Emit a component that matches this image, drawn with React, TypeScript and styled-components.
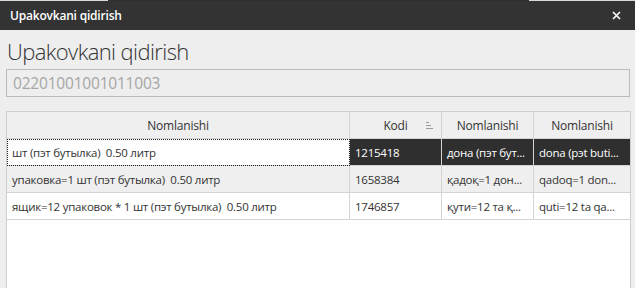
import React from "react";
import styled, { createGlobalStyle } from "styled-components";

const Global = createGlobalStyle`
  html, body { margin: 0; padding: 0; background: #eeeeee; }
  body { font-family: "Open Sans", "Noto Sans", sans-serif; overflow: hidden; }
  * { box-sizing: border-box; }
`;

const Page = styled.div`
  width: 635px;
  height: 288px;
  display: flex;
  flex-direction: column;
  background: #eeeeee;
  overflow: hidden;
  & > * { flex-shrink: 0; }
`;

const TopStrip = styled.div`
  height: 1px;
  display: flex;
`;

const StripPart = styled.div<{ $w: string; $c: string }>`
  flex: ${(p) => p.$w};
  background: ${(p) => p.$c};
`;

const TitleBar = styled.div`
  height: 29px;
  background: #333333;
  display: flex;
  align-items: center;
  justify-content: space-between;
  padding: 0 14px 0 10px;
`;

const WinTitle = styled.div`
  color: #ffffff;
  font-size: 12px;
  font-weight: 600;
  letter-spacing: -0.2px;
`;

const Close = styled.svg`
  width: 9px;
  height: 9px;
  display: block;
`;

const Content = styled.div`
  padding: 0 5px 0 6px;
  display: flex;
  flex-direction: column;
  & > * { flex-shrink: 0; }
`;

const Heading = styled.h1`
  margin: 4px 0 0 1px;
  font-size: 22px;
  font-weight: 300;
  color: #333333;
  line-height: 34px;
  height: 35px;
  letter-spacing: -0.6px;
`;

const SearchBox = styled.div`
  height: 28px;
  border: 1px solid #bbbbbb;
  display: flex;
  align-items: center;
  padding: 0 6px;
  font-size: 15.5px;
  color: #a6a6a6;
  letter-spacing: -0.2px;
`;

const Table = styled.div`
  margin-top: 14px;
  border: 1px solid #cfcfcf;
  background: #ffffff;
  height: 200px;
  width: 625px;
  display: grid;
  grid-template-columns: 343px 92px 92px 1fr;
  grid-auto-rows: 27px;
  align-content: start;
  font-size: 11.5px;
  color: #333333;
`;

const HeadCell = styled.div<{ $last?: boolean }>`
  height: 27px;
  background: #efefef;
  border-bottom: 1px solid #d4d4d4;
  border-right: ${(p) => (p.$last ? "none" : "1px solid #d4d4d4")};
  display: flex;
  align-items: center;
  justify-content: center;
  position: relative;
  font-size: 12px;
  letter-spacing: -0.2px;
`;

const SortIcon = styled.svg`
  position: absolute;
  right: 8px;
  top: 10px;
  width: 7px;
  height: 7px;
`;

const Cell = styled.div<{ $bg: string; $fg: string; $last?: boolean; $focus?: boolean }>`
  height: 27px;
  background: ${(p) => p.$bg};
  color: ${(p) => p.$fg};
  border-bottom: 1px solid #d4d4d4;
  border-right: ${(p) => (p.$last ? "none" : "1px solid #d4d4d4")};
  outline: ${(p) => (p.$focus ? "1px dotted #222" : "none")};
  outline-offset: -1px;
  display: flex;
  align-items: center;
  padding-left: 5px;
  white-space: pre;
  overflow: hidden;
  letter-spacing: -0.25px;
`;

const rows = [
  ["шт (пэт бутылка)  0.50 литр", "1215418", "дона (пэт бут...", "dona (pэt buti..."],
  ["упаковка=1 шт (пэт бутылка)  0.50 литр", "1658384", "қадоқ=1 дон...", "qadoq=1 don..."],
  ["ящик=12 упаковок * 1 шт (пэт бутылка)  0.50 литр", "1746857", "қути=12 та қ...", "quti=12 ta qa..."],
];

export default function App() {
  return (
    <Page>
      <Global />
      <TopStrip>
        <StripPart $w="108" $c="#d9d9d9" />
        <StripPart $w="421" $c="#2e2e2e" />
        <StripPart $w="106" $c="#d9d9d9" />
      </TopStrip>
      <TitleBar>
        <WinTitle>Upakovkani qidirish</WinTitle>
        <Close viewBox="0 0 9 9">
          <path d="M1 1 L8 8 M8 1 L1 8" stroke="#ffffff" strokeWidth="1.6" />
        </Close>
      </TitleBar>
      <Content>
        <Heading>Upakovkani qidirish</Heading>
        <SearchBox>02201001001011003</SearchBox>
        <Table>
          <HeadCell>Nomlanishi</HeadCell>
          <HeadCell>
            Kodi
            <SortIcon viewBox="0 0 7 7">
              <path d="M0 0.5 H3 M0 3.5 H5 M0 6.5 H7" stroke="#9a9a9a" strokeWidth="1" />
            </SortIcon>
          </HeadCell>
          <HeadCell>Nomlanishi</HeadCell>
          <HeadCell $last>Nomlanishi</HeadCell>
          {rows.map((r, i) =>
            r.map((t, j) => {
              const selected = i === 0 && j > 0;
              const bg = selected ? "#2f2f2f" : i === 1 ? "#efefef" : "#ffffff";
              const fg = selected ? "#ffffff" : "#333333";
              return (
                <Cell
                  key={`${i}-${j}`}
                  $bg={bg}
                  $fg={fg}
                  $last={j === 3}
                  $focus={i === 0 && j === 0}
                >
                  {t}
                </Cell>
              );
            })
          )}
        </Table>
      </Content>
    </Page>
  );
}
